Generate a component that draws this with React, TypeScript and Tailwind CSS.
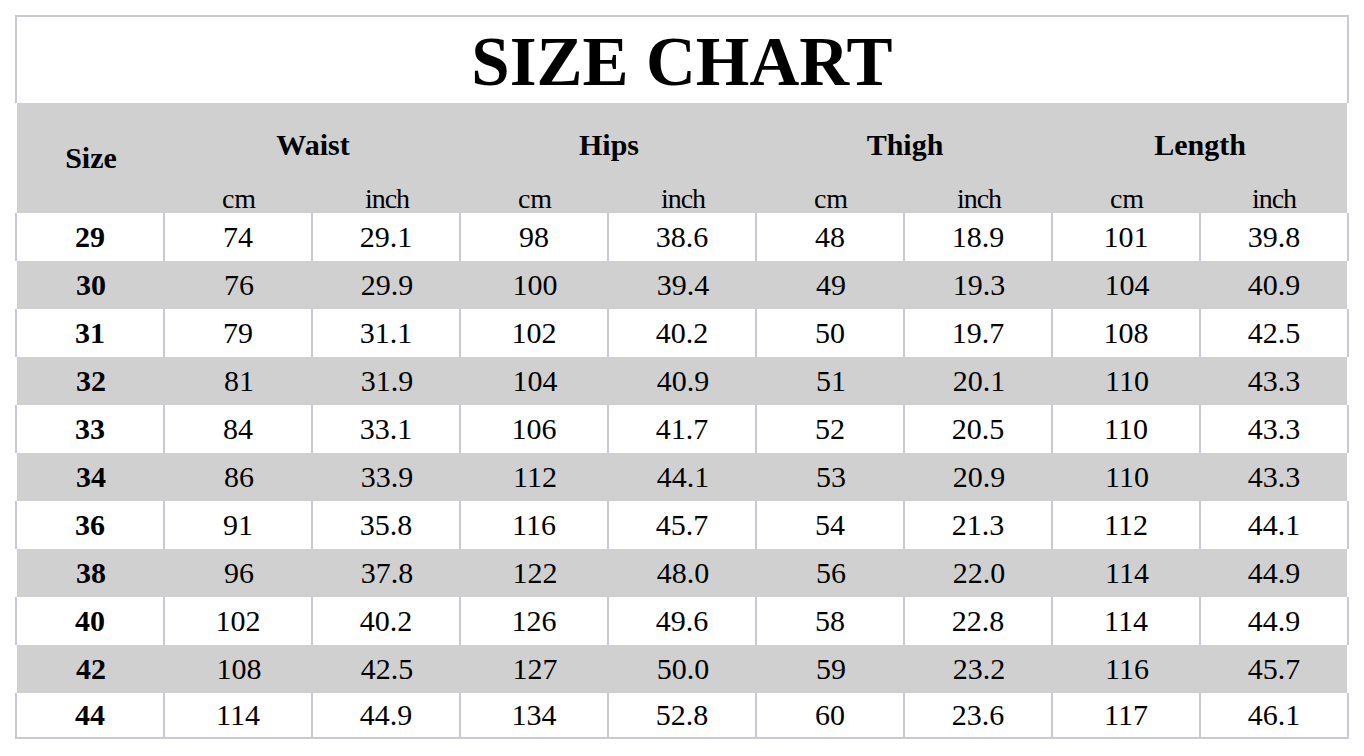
const rows: [string, string, string, string, string, string, string, string, string][] = [
  ["29", "74", "29.1", "98", "38.6", "48", "18.9", "101", "39.8"],
  ["30", "76", "29.9", "100", "39.4", "49", "19.3", "104", "40.9"],
  ["31", "79", "31.1", "102", "40.2", "50", "19.7", "108", "42.5"],
  ["32", "81", "31.9", "104", "40.9", "51", "20.1", "110", "43.3"],
  ["33", "84", "33.1", "106", "41.7", "52", "20.5", "110", "43.3"],
  ["34", "86", "33.9", "112", "44.1", "53", "20.9", "110", "43.3"],
  ["36", "91", "35.8", "116", "45.7", "54", "21.3", "112", "44.1"],
  ["38", "96", "37.8", "122", "48.0", "56", "22.0", "114", "44.9"],
  ["40", "102", "40.2", "126", "49.6", "58", "22.8", "114", "44.9"],
  ["42", "108", "42.5", "127", "50.0", "59", "23.2", "116", "45.7"],
  ["44", "114", "44.9", "134", "52.8", "60", "23.6", "117", "46.1"],
]

const groups = ["Waist", "Hips", "Thigh", "Length"]

function Row({ cells, shaded, last }: { cells: string[]; shaded: boolean; last: boolean }) {
  const wrap = shaded
    ? "mx-[2px] bg-[#d1d0d1]"
    : `border-x-2 border-[#c9cad6] bg-white ${last ? "border-b-2" : ""}`
  return (
    <div className={`flex ${last ? "h-[46px]" : "h-[48px]"} ${wrap}`}>
      {cells.map((c, i) => (
        <div
          key={i}
          className={`flex items-center justify-center text-[30px] leading-[30px] ${
            i < 8 ? "w-[148px]" : "flex-1"
          } ${!shaded && i < 8 ? "border-r-2 border-[#c9cad6]" : ""} ${i === 0 ? "font-bold" : ""}`}
        >
          {c}
        </div>
      ))}
    </div>
  )
}

export default function App() {
  return (
    <div className="min-h-[756px] bg-white pt-[15px] pl-[15px] text-black" style={{ fontFamily: '"Liberation Serif", "Times New Roman", serif' }}>
      <div className="w-[1334px]">
        <div className="h-[88px] border-2 border-b-0 border-[#c9cad6] pt-[11px] text-center">
          <h1 className="text-[69px] font-bold leading-[69px]">SIZE CHART</h1>
        </div>

        <div className="mx-[2px] flex h-[110px] bg-[#d1d0d1]">
          <div className="flex w-[148px] items-center justify-center text-[30px] font-bold leading-[30px]">Size</div>
          {groups.map((g, i) => (
            <div key={g} className={`flex flex-col pt-[27px] ${i < 3 ? "w-[296px]" : "flex-1"}`}>
              <div className="text-center text-[30px] font-bold leading-[30px]">{g}</div>
              <div className="mt-[25px] flex text-[28px] leading-[28px]">
                <div className="w-[148px] text-center">cm</div>
                <div className="flex-1 text-center tracking-[-1px]">inch</div>
              </div>
            </div>
          ))}
        </div>

        {rows.map((r, i) => (
          <Row key={r[0]} cells={r} shaded={i % 2 === 1} last={i === rows.length - 1} />
        ))}
      </div>
    </div>
  )
}
